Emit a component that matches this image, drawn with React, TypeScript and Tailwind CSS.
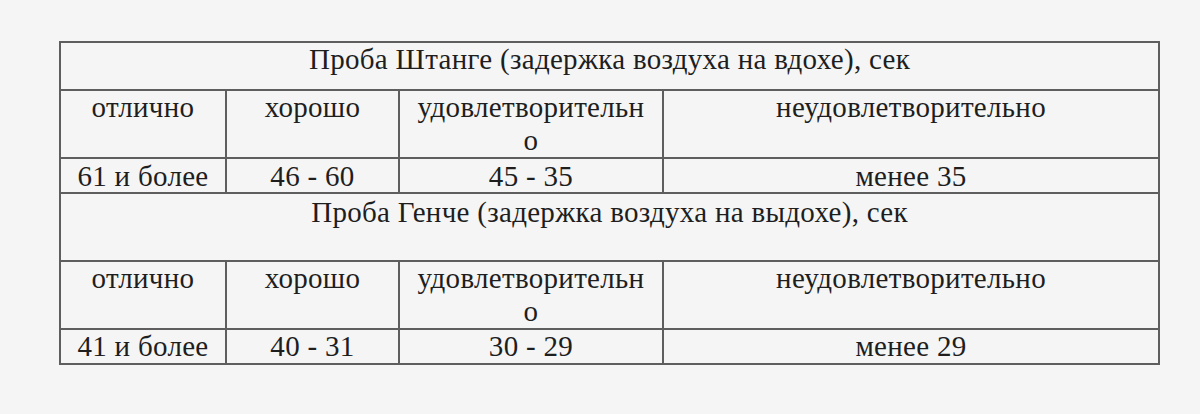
const cell =
  "border-2 border-[#5e5e5e] text-center align-top px-1 text-[#1e1e1e] font-['Liberation_Serif',serif] text-[29px] tracking-[0.3px] font-normal";

const grades = ["отлично", "хорошо", "удовлетворительно", "неудовлетворительно"];

type Block = {
  title: string;
  values: string[];
};

const blocks: Block[] = [
  {
    title: "Проба Штанге (задержка воздуха на вдохе), сек",
    values: ["61 и более", "46 - 60", "45 - 35", "менее 35"],
  },
  {
    title: "Проба Генче (задержка воздуха на выдохе), сек",
    values: ["41 и более", "40 - 31", "30 - 29", "менее 29"],
  },
];

function GradeText({ text }: { text: string }) {
  // в исходнике слово не влезает в ячейку и переносится
  if (text === "удовлетворительно") {
    return (
      <>
        удовлетворительн
        <br />о
      </>
    );
  }
  return <>{text}</>;
}

export default function App() {
  return (
    <div className="w-[1200px] h-[414px] bg-[#f5f5f5] pt-[41px] pl-[59px] font-serif">
      <table className="border-collapse w-[1099px] table-fixed">
        <colgroup>
          <col className="w-[166px]" />
          <col className="w-[173px]" />
          <col className="w-[264px]" />
          <col className="w-[496px]" />
        </colgroup>
        <tbody>
          {blocks.map((b, i) => (
            <FragmentRows key={i} block={b} first={i === 0} />
          ))}
        </tbody>
      </table>
    </div>
  );
}

function FragmentRows({ block, first }: { block: Block; first: boolean }) {
  return (
    <>
      <tr>
        <td
          colSpan={4}
          className={`${cell} leading-[33px] ${first ? "h-[48px] pt-0 pb-[13px]" : "h-[68px] pt-[2px] pb-[31px]"}`}
        >
          {block.title}
        </td>
      </tr>
      <tr>
        {grades.map((g) => (
          <td key={g} className={`${cell} leading-[33px] h-[68px] pt-0 pb-0`}>
            <GradeText text={g} />
          </td>
        ))}
      </tr>
      <tr>
        {block.values.map((v) => (
          <td key={v} className={`${cell} leading-[31px] h-[35px] ${first ? "pt-[2px]" : "pt-[1px]"} pb-0`}>
            {v}
          </td>
        ))}
      </tr>
    </>
  );
}
